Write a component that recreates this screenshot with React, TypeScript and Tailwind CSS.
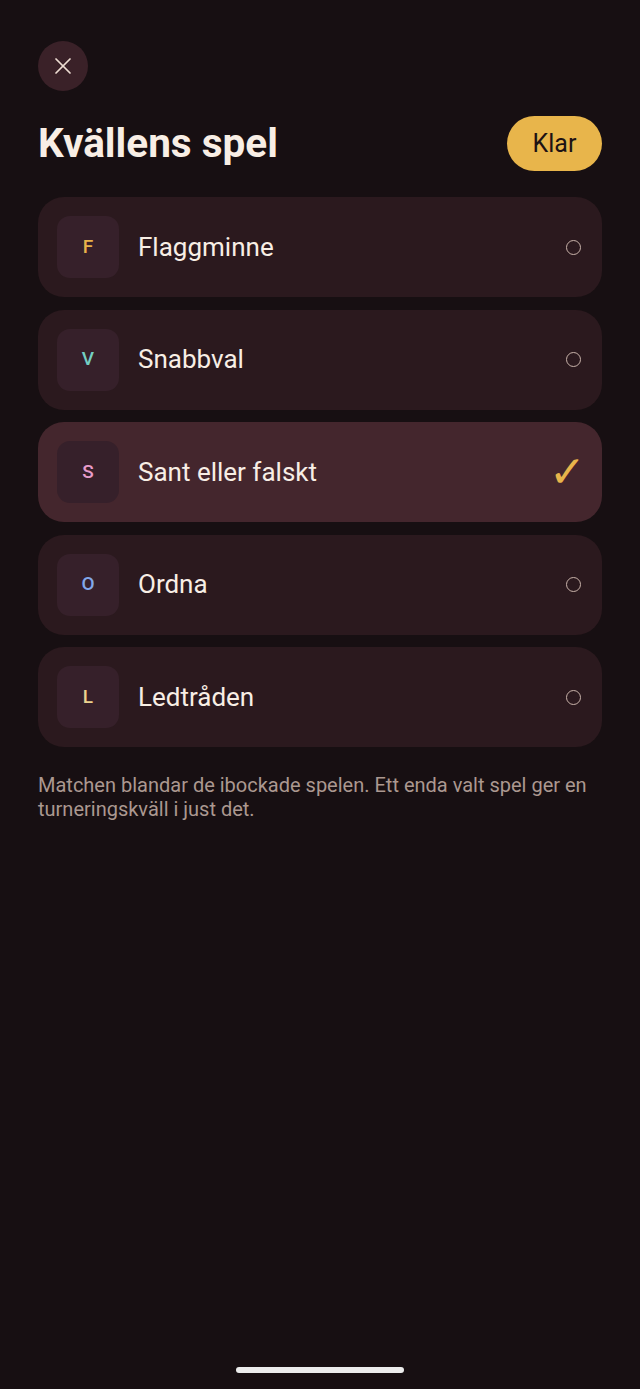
import { X } from "lucide-react";

const games = [
  { letter: "F", name: "Flaggminne", color: "text-[#e9b24a]", on: false },
  { letter: "V", name: "Snabbval", color: "text-[#74cfc2]", on: false },
  { letter: "S", name: "Sant eller falskt", color: "text-[#e79ccb]", on: true },
  { letter: "O", name: "Ordna", color: "text-[#82a8ea]", on: false },
  { letter: "L", name: "Ledtråden", color: "text-[#ecd28e]", on: false },
];

export default function App() {
  return (
    <div className="relative min-h-[1389px] w-full bg-[#170f12] font-['Roboto','Liberation_Sans',sans-serif] text-[#f7ede4]">
      <div className="px-[38px] pt-[41px]">
        <button className="flex h-[50px] w-[50px] items-center justify-center rounded-full bg-[#3a2128] text-[#eddcd2]">
          <X size={28} strokeWidth={1.5} />
        </button>

        <div className="mt-[25px] flex items-center justify-between">
          <h1 className="text-[40.5px] font-bold leading-none text-[#f8eee5]">Kvällens spel</h1>
          <button className="flex h-[55px] w-[95px] items-center justify-center rounded-full bg-[#e8b54b] text-[25px] text-[#1d1214]">
            Klar
          </button>
        </div>

        <div className="mt-[26px] flex flex-col gap-[12.5px]">
          {games.map((g) => (
            <div
              key={g.name}
              className={`flex h-[100px] items-center rounded-[26px] pl-[19px] pr-[21px] ${
                g.on ? "bg-[#44262d]" : "bg-[#2b191e]"
              }`}
            >
              <div className="flex h-[62px] w-[62px] items-center justify-center rounded-[13px] bg-[#36202a]">
                <span className={`text-[19px] font-medium ${g.color}`}>{g.letter}</span>
              </div>
              <span className="ml-[19px] flex-1 text-[26px] text-[#f8eee5]">{g.name}</span>
              {g.on ? (
                <span className="mr-[-5px] text-[44px] leading-none text-[#e8b54b]">✓</span>
              ) : (
                <span className="h-[15px] w-[15px] rounded-full border-[1.5px] border-[#c9b3aa]" />
              )}
            </div>
          ))}
        </div>

        <p className="mt-[26px] text-[20px] leading-[24px] text-[#ab9890]">
          Matchen blandar de ibockade spelen. Ett enda valt spel ger en turneringskväll i just det.
        </p>
      </div>

      <div className="absolute bottom-[16px] left-1/2 h-[6px] w-[168px] -translate-x-1/2 rounded-full bg-[#ececec]" />
    </div>
  );
}
